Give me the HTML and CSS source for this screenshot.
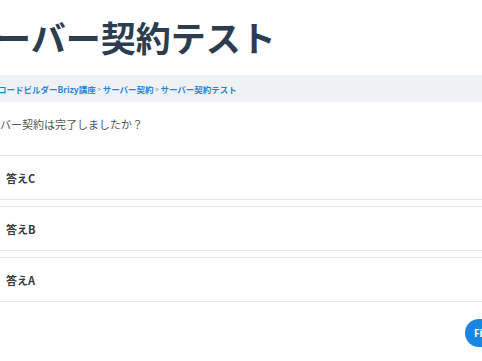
FILE: index.html
```html
<!DOCTYPE html>
<html lang="ja">
<head>
<meta charset="utf-8">
<link rel="stylesheet" href="styles.css">
</head>
<body>
<div class="page">
  <h1 class="title">サーバー契約テスト</h1>
  <nav class="crumbs">
    <div class="crumbs-inner">
      <a class="crumb" href="#">ノーコードビルダーBrizy講座</a>
      <span class="sep">&gt;</span>
      <a class="crumb" href="#">サーバー契約</a>
      <span class="sep">&gt;</span>
      <a class="crumb" href="#">サーバー契約テスト</a>
    </div>
  </nav>
  <p class="question">サーバー契約は完了しましたか？</p>
  <div class="answers">
    <div class="answer">答えC</div>
    <div class="answer">答えB</div>
    <div class="answer">答えA</div>
  </div>
  <div class="actions">
    <button class="finish">Finish</button>
  </div>
</div>
</body>
</html>
```
FILE: styles.css
```css
html, body {
  margin: 0;
  padding: 0;
  background: #ffffff;
  overflow: hidden;
}
body {
  font-family: "Noto Sans", "Noto Sans CJK JP", sans-serif;
  color: #333;
}
.page {
  margin-left: -29px;
  width: 560px;
}
.title {
  margin: 0;
  padding-top: 15px;
  height: 60px;
  box-sizing: border-box;
  font-family: "Noto Sans CJK JP", sans-serif;
  font-size: 35px;
  font-weight: 700;
  line-height: 44px;
  color: #2c3d4f;
  margin-left: -10px;
}
.crumbs {
  margin-top: 15px;
  background: #eff2f5;
  height: 27px;
  display: flex;
  align-items: center;
}
.crumbs-inner {
  display: flex;
  align-items: center;
  gap: 1.5px;
  margin-left: 10px;
  font-family: "Noto Sans CJK JP", sans-serif;
  font-size: 8.5px;
  font-weight: 700;
}
.crumb {
  color: #1f86e0;
  text-decoration: none;
}
.sep {
  color: #8a96a3;
  font-size: 7px;
  font-weight: 400;
}
.question {
  margin: 0;
  padding-top: 14px;
  height: 39px;
  box-sizing: border-box;
  font-family: "Noto Sans CJK JP", sans-serif;
  font-size: 11px;
  line-height: 16px;
  color: #555;
  margin-left: 7px;
}
.answers {
  margin-top: 14px;
  display: flex;
  flex-direction: column;
  gap: 6px;
}
.answer {
  height: 45px;
  box-sizing: border-box;
  border: 1px solid #e3e8ee;
  border-width: 1.5px 0;
  display: flex;
  align-items: center;
  padding-left: 35px;
  font-family: "Noto Sans CJK JP", sans-serif;
  font-size: 11px;
  font-weight: 700;
  color: #3a3a3a;
}
.actions {
  display: flex;
  justify-content: flex-start;
  padding-left: 494px;
  margin-top: 17px;
}
.finish {
  height: 28px;
  padding: 0 9px;
  border: none;
  border-radius: 14px;
  background: #1a86e2;
  color: #fff;
  font-family: "Noto Sans", sans-serif;
  font-size: 10px;
  font-weight: 700;
}
```
